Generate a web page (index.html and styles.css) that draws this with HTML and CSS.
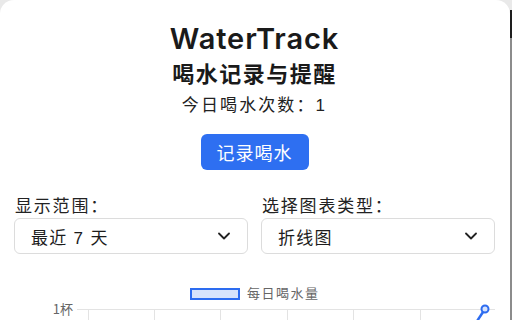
FILE: index.html
```html
<!DOCTYPE html>
<html lang="zh-CN">
<head>
  <meta charset="UTF-8" />
  <title>WaterTrack</title>
  <link rel="stylesheet" href="styles.css">
</head>
<body>
  <div class="popup">
    <h1>WaterTrack</h1>
    <h2>喝水记录与提醒</h2>
    <p class="count">今日喝水次数：<span id="count">1</span></p>
    <button class="drink-btn">记录喝水</button>

    <div class="controls">
      <div class="field">
        <label>显示范围：</label>
        <div class="select">
          <span>最近 7 天</span>
          <svg width="12" height="8" viewBox="0 0 12 8"><path d="M1 1.5 L6 6.5 L11 1.5" fill="none" stroke="#222" stroke-width="1.8" stroke-linecap="round" stroke-linejoin="round"/></svg>
        </div>
      </div>
      <div class="field">
        <label>选择图表类型：</label>
        <div class="select">
          <span>折线图</span>
          <svg width="12" height="8" viewBox="0 0 12 8"><path d="M1 1.5 L6 6.5 L11 1.5" fill="none" stroke="#222" stroke-width="1.8" stroke-linecap="round" stroke-linejoin="round"/></svg>
        </div>
      </div>
    </div>

    <svg class="chart" width="481" height="70" viewBox="0 0 481 70">
      <rect x="177" y="35" width="48" height="10" fill="#d7e3fc" stroke="#2d6cf0" stroke-width="2"/>
      <text x="233" y="44" class="axis-text legend">每日喝水量</text>
      <text x="59" y="60" text-anchor="end" class="axis-text">1杯</text>
      <line x1="63" y1="55.5" x2="481" y2="55.5" stroke="#e3e3e3"/>
      <g stroke="#e3e3e3">
        <line x1="74.5" y1="55" x2="74.5" y2="70"/>
        <line x1="140.5" y1="55" x2="140.5" y2="70"/>
        <line x1="206.5" y1="55" x2="206.5" y2="70"/>
        <line x1="273.5" y1="55" x2="273.5" y2="70"/>
        <line x1="339.5" y1="55" x2="339.5" y2="70"/>
        <line x1="406.5" y1="55" x2="406.5" y2="70"/>
      </g>
      <polyline points="471,55 406,154" fill="none" stroke="#2d6cf0" stroke-width="2.5"/>
      <circle cx="471" cy="55" r="3.5" fill="#d7e3fc" stroke="#2d6cf0" stroke-width="2"/>
    </svg>
  </div>
  <div class="scrollbar"><div class="thumb"></div></div>
</body>
</html>
```

FILE: styles.css
```css
body {
  margin: 0;
  background: #e9e9e9;
  font-family: "Liberation Sans", "Noto Sans CJK SC", sans-serif;
  color: #1c1c1c;
  overflow: hidden;
}
.popup {
  width: 510px;
  height: 320px;
  box-sizing: border-box;
  padding: 0 15px 0 14px;
  background: #fff;
  border-radius: 14px 14px 0 0;
  text-align: center;
}
h1 {
  margin: 0;
  padding-top: 21px;
  font-family: Inter, "Liberation Sans", sans-serif;
  font-size: 29px;
  line-height: 36px;
  font-weight: 600;
  letter-spacing: 0.9px;
  color: #1a1a1a;
}
h2 {
  margin: 4px 0 0;
  font-size: 22px;
  line-height: 28px;
  font-weight: bold;
  letter-spacing: 1.5px;
  color: #1a1a1a;
}
.count {
  margin: 5px 0 0;
  font-size: 17px;
  line-height: 24px;
  letter-spacing: 2.1px;
  color: #222;
}
.drink-btn {
  margin-top: 16px;
  height: 36px;
  padding: 0 16px;
  border: none;
  border-radius: 6px;
  background: #2e6ff1;
  color: #fff;
  font-family: "Noto Sans CJK SC", sans-serif;
  font-size: 18px;
  letter-spacing: 1px;
}
.controls {
  display: flex;
  gap: 13px;
  margin-top: 26px;
  text-align: left;
}
.field {
  flex: 1;
}
.field label {
  display: block;
  height: 22px;
  line-height: 22px;
  font-size: 17px;
  letter-spacing: 1.8px;
  padding-left: 1px;
  color: #222;
}
.select {
  display: flex;
  align-items: center;
  justify-content: space-between;
  height: 36px;
  box-sizing: border-box;
  padding: 0 17px 0 16px;
  border: 1px solid #dcdcdc;
  border-radius: 6px;
  font-size: 17px;
  letter-spacing: 1.3px;
  color: #1c1c1c;
}
.chart {
  display: block;
}
.axis-text {
  font-family: "Noto Sans CJK SC", sans-serif;
  font-size: 13px;
  fill: #666;
}
.legend {
  letter-spacing: 1.5px;
}
.scrollbar {
  position: absolute;
  top: 10px;
  right: 0;
  width: 2px;
  height: 310px;
  background: #8c8c8c;
}
.thumb {
  height: 28px;
  background: #1e1e1e;
}
```
